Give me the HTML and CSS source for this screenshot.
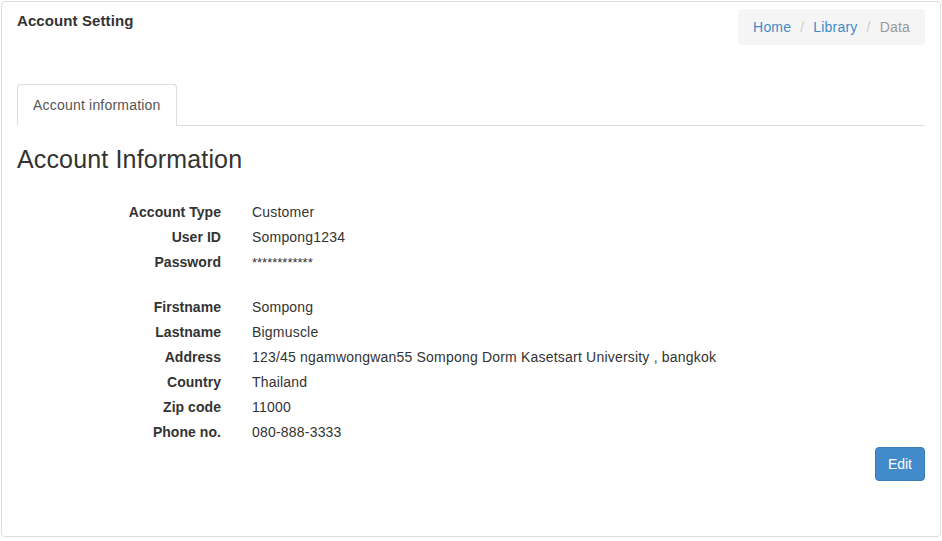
FILE: index.html
```html
<!DOCTYPE html>
<html>
<head>
<meta charset="utf-8">
<link rel="stylesheet" href="styles.css">
</head>
<body>
<div class="panel">
  <div class="header">
    <div class="title">Account Setting</div>
    <ol class="breadcrumb">
      <li><a href="#">Home</a></li>
      <li class="sep">/</li>
      <li><a href="#">Library</a></li>
      <li class="sep">/</li>
      <li class="active">Data</li>
    </ol>
  </div>
  <ul class="tabs">
    <li class="tab">Account information</li>
  </ul>
  <h2 class="heading">Account Information</h2>
  <div class="info">
    <div class="label">Account Type</div><div class="value">Customer</div>
    <div class="label">User ID</div><div class="value">Sompong1234</div>
    <div class="label">Password</div><div class="value pw">************</div>
    <div class="spacer"></div>
    <div class="label">Firstname</div><div class="value">Sompong</div>
    <div class="label">Lastname</div><div class="value">Bigmuscle</div>
    <div class="label">Address</div><div class="value">123/45 ngamwongwan55 Sompong Dorm Kasetsart University , bangkok</div>
    <div class="label">Country</div><div class="value">Thailand</div>
    <div class="label">Zip code</div><div class="value">11000</div>
    <div class="label">Phone no.</div><div class="value">080-888-3333</div>
  </div>
  <div class="actions">
    <button class="btn">Edit</button>
  </div>
</div>
</body>
</html>
```
FILE: styles.css
```css
* { box-sizing: border-box; }
html, body {
  margin: 0;
  padding: 0;
  background: #fff;
}
body {
  font-family: "Liberation Sans", Arial, sans-serif;
  font-size: 14px;
  letter-spacing: 0.2px;
  color: #333;
  padding: 1px;
}
.panel {
  width: 940px;
  height: 536px;
  border: 1px solid #ddd;
  border-radius: 4px;
  padding: 7px 15px 0 15px;
}
.header {
  display: flex;
  justify-content: space-between;
  align-items: flex-start;
  margin-bottom: 39px;
}
.title {
  font-size: 15px;
  font-weight: bold;
  letter-spacing: 0.1px;
  line-height: 20px;
  padding-top: 2px;
  color: #333;
}
.breadcrumb {
  list-style: none;
  margin: 0;
  padding: 8px 15px;
  line-height: 20px;
  background: #f5f5f5;
  border-radius: 4px;
  display: flex;
}
.breadcrumb a {
  color: #428bca;
  text-decoration: none;
}
.breadcrumb .sep {
  color: #ccc;
  padding: 0 9px 0 9px;
}
.breadcrumb .active {
  color: #999;
}
.tabs {
  list-style: none;
  margin: 0;
  padding: 0;
  display: flex;
  border-bottom: 1px solid #ddd;
}
.tab {
  padding: 10px 15px;
  line-height: 20px;
  border: 1px solid #ddd;
  border-bottom-color: transparent;
  border-radius: 4px 4px 0 0;
  margin-bottom: -1px;
  background: #fff;
  color: #555;
}
.heading {
  margin: 20px 0 0 0;
  font-size: 25px;
  font-weight: normal;
  letter-spacing: 0.15px;
  line-height: 26px;
  color: #333;
}
.info {
  display: grid;
  grid-template-columns: 204px 1fr;
  column-gap: 31px;
  margin-top: 28px;
}
.label, .value {
  line-height: 25px;
  height: 25px;
}
.label {
  font-weight: bold;
  letter-spacing: 0.05px;
  text-align: right;
}
.pw {
  font-size: 13px;
  letter-spacing: 0;
}
.spacer {
  grid-column: 1 / span 2;
  height: 20px;
}
.actions {
  display: flex;
  justify-content: flex-end;
  margin-top: 2px;
}
.btn {
  font-family: "Liberation Sans", Arial, sans-serif;
  font-size: 14px;
  letter-spacing: 0;
  line-height: 20px;
  padding: 6px 12px;
  color: #fff;
  background: #428bca;
  border: 1px solid #357ebd;
  border-radius: 4px;
  cursor: pointer;
}
```
